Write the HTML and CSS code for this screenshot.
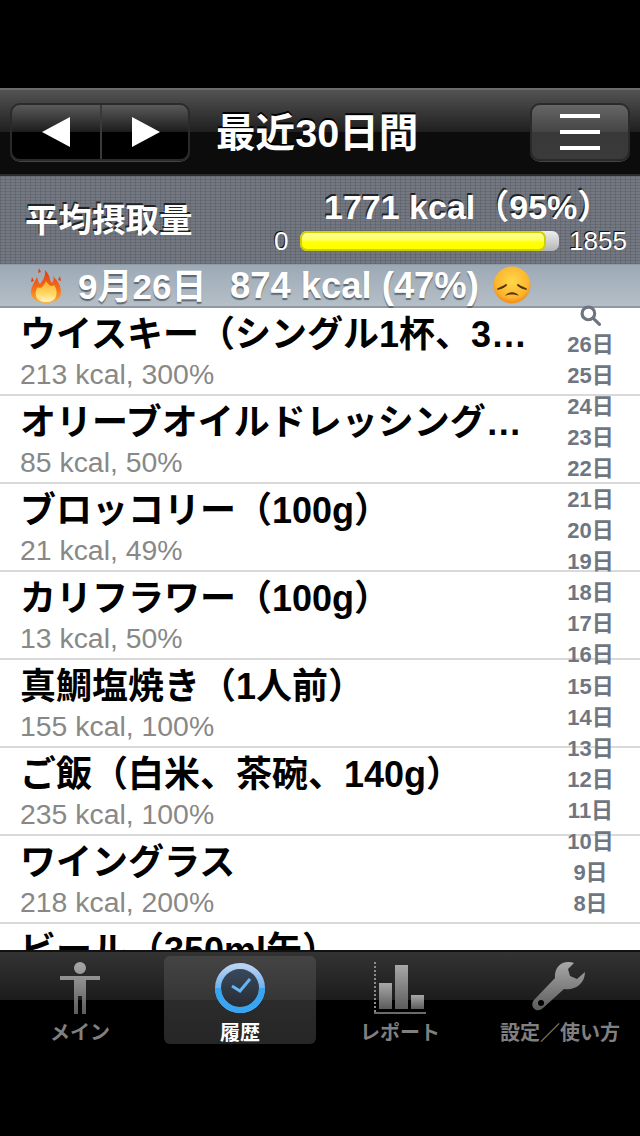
FILE: index.html
```html
<!DOCTYPE html>
<html lang="ja">
<head>
    <meta charset="UTF-8">
    <meta name="viewport" content="width=device-width, initial-scale=1.0">
    <title>最近30日間</title>
    <link rel="stylesheet" href="styles.css">
</head>
<body>
    <div class="app">
        <header class="nav-bar">
            <div class="nav-button pager">
                <span class="pager-half">
                    <svg class="pager-arrow" viewBox="0 0 28 30"><polygon points="0,15 28,0 28,30"/></svg>
                </span>
                <span class="pager-half">
                    <svg class="pager-arrow" viewBox="0 0 28 30"><polygon points="28,15 0,0 0,30"/></svg>
                </span>
            </div>
            <h1 class="nav-title">最近30日間</h1>
            <div class="nav-button menu">
                <span class="menu-line"></span>
                <span class="menu-line"></span>
                <span class="menu-line"></span>
            </div>
        </header>

        <section class="summary">
            <div class="summary-label">平均摂取量</div>
            <div class="summary-data">
                <div class="summary-value">1771 kcal（95%）</div>
                <div class="gauge-row">
                    <span class="gauge-min">0</span>
                    <div class="gauge"><div class="gauge-fill" style="width: 95%"></div></div>
                    <span class="gauge-max">1855</span>
                </div>
            </div>
        </section>

        <div class="day-header">
            <svg class="flame" viewBox="0 0 32 36">
                <defs>
                    <linearGradient id="flameOuter" x1="0" y1="0" x2="0" y2="1">
                        <stop offset="0" stop-color="#e2380c"/>
                        <stop offset="0.6" stop-color="#f7731a"/>
                        <stop offset="1" stop-color="#fbb23c"/>
                    </linearGradient>
                    <linearGradient id="flameInner" x1="0" y1="0" x2="0" y2="1">
                        <stop offset="0" stop-color="#fba92a"/>
                        <stop offset="0.6" stop-color="#ffd964"/>
                        <stop offset="1" stop-color="#fff2c4"/>
                    </linearGradient>
                </defs>
                <path fill="url(#flameOuter)" d="M15 2 C21 8 19 12 22 15 C24 13 24 10 23 8 C28 13 31 18 31 24 C31 31 25 35 16 35 C7 35 1 31 1 24 C1 19 4 15 7 9 C8 12 8 14 10 16 C13 12 16 8 15 2Z"/>
                <path fill="url(#flameInner)" d="M16 13 C19 18 22 19 24 17 C27 21 27 26 26 28 C25 32 21 34 16 34 C11 34 7 32 6 28 C5 25 6 21 8 19 C10 21 13 20 16 13Z"/>
                <path fill="#e2400e" d="M1 14 L2 9 L4 13Z M28 12 L30 8 L31 13Z M8 5 L9 0 L11 4Z"/>
            </svg>
            <span class="day-date">9月26日</span>
            <span class="day-total">874 kcal (47%)</span>
            <svg class="face" viewBox="0 0 38 38">
                <defs>
                    <radialGradient id="faceFill" cx="0.5" cy="0.4" r="0.6">
                        <stop offset="0" stop-color="#ffd84a"/>
                        <stop offset="0.75" stop-color="#fcb52c"/>
                        <stop offset="1" stop-color="#f08a18"/>
                    </radialGradient>
                </defs>
                <circle cx="19" cy="19" r="18.5" fill="url(#faceFill)"/>
                <path d="M5 23 C8 22 11 21 13 19 M33 23 C30 22 27 21 25 19" stroke="#5a3208" stroke-width="1.8" stroke-linecap="round" fill="none"/>
                <path d="M12 30 C15 25 23 25 26 30 C23 28 15 28 12 30Z" fill="#5a3208"/>
            </svg>
        </div>

        <main class="list-area">
            <ul class="meal-list">
                <li class="meal-row"><div class="meal-name">ウイスキー（シングル1杯、3…</div><div class="meal-info">213 kcal, 300%</div></li>
                <li class="meal-row"><div class="meal-name">オリーブオイルドレッシング…</div><div class="meal-info">85 kcal, 50%</div></li>
                <li class="meal-row"><div class="meal-name">ブロッコリー（100g）</div><div class="meal-info">21 kcal, 49%</div></li>
                <li class="meal-row"><div class="meal-name">カリフラワー（100g）</div><div class="meal-info">13 kcal, 50%</div></li>
                <li class="meal-row"><div class="meal-name">真鯛塩焼き（1人前）</div><div class="meal-info">155 kcal, 100%</div></li>
                <li class="meal-row"><div class="meal-name">ご飯（白米、茶碗、140g）</div><div class="meal-info">235 kcal, 100%</div></li>
                <li class="meal-row"><div class="meal-name">ワイングラス</div><div class="meal-info">218 kcal, 200%</div></li>
                <li class="meal-row"><div class="meal-name">ビール（350ml缶）</div></li>
            </ul>
            <div class="day-index">
                <svg class="index-search" viewBox="0 0 20 20">
                    <circle cx="8" cy="8" r="6" fill="none" stroke="#6d7580" stroke-width="3"/>
                    <path d="M12.5 12.5 L18.5 18.5" stroke="#6d7580" stroke-width="3" stroke-linecap="round"/>
                </svg>
                <span>26日</span><span>25日</span><span>24日</span><span>23日</span><span>22日</span>
                <span>21日</span><span>20日</span><span>19日</span><span>18日</span><span>17日</span>
                <span>16日</span><span>15日</span><span>14日</span><span>13日</span><span>12日</span>
                <span>11日</span><span>10日</span><span>9日</span><span>8日</span>
            </div>
        </main>

        <nav class="tab-bar">
            <div class="tab">
                <svg class="tab-icon" viewBox="0 0 60 60">
                    <defs>
                        <linearGradient id="tabGray" x1="0" y1="0" x2="0" y2="1">
                            <stop offset="0" stop-color="#a8a8a8"/>
                            <stop offset="1" stop-color="#5c5c5c"/>
                        </linearGradient>
                    </defs>
                    <path fill="url(#tabGray)" d="M30 2 A6 6 0 1 1 30 14 A6 6 0 1 1 30 2Z M10 16 H50 V20 H36 V54 H32 V36 H28 V54 H24 V20 H10Z"/>
                </svg>
                <span class="tab-label">メイン</span>
            </div>
            <div class="tab active">
                <svg class="tab-icon" viewBox="0 0 60 60">
                    <defs>
                        <linearGradient id="clockTop" x1="0" y1="0" x2="0" y2="1">
                            <stop offset="0" stop-color="#b9d4f2"/>
                            <stop offset="0.5" stop-color="#6fb0ee"/>
                        </linearGradient>
                        <linearGradient id="clockBody" x1="0" y1="0" x2="0" y2="1">
                            <stop offset="0" stop-color="#3a4c60"/>
                            <stop offset="1" stop-color="#26292e"/>
                        </linearGradient>
                    </defs>
                    <circle cx="30" cy="28" r="22" fill="url(#clockBody)" stroke="url(#clockTop)" stroke-width="6"/>
                    <path d="M52 28 A22 22 0 0 1 8 28" fill="none" stroke="#37a5f2" stroke-width="6"/>
                    <path d="M22 26 L30 31 L40 19" fill="none" stroke="#65b6f2" stroke-width="3"/>
                </svg>
                <span class="tab-label">履歴</span>
            </div>
            <div class="tab">
                <svg class="tab-icon" viewBox="0 0 60 60">
                    <path d="M5 2 V52" stroke="#8c8c8c" stroke-width="2" stroke-dasharray="2 2"/>
                    <rect x="4" y="52" width="52" height="2" fill="#6a6a6a"/>
                    <rect x="9" y="23" width="13" height="26" fill="url(#tabGray)"/>
                    <rect x="25" y="5" width="13" height="44" fill="url(#tabGray)"/>
                    <rect x="41" y="35" width="13" height="14" fill="url(#tabGray)"/>
                </svg>
                <span class="tab-label">レポート</span>
            </div>
            <div class="tab">
                <svg class="tab-icon" viewBox="0 0 60 60">
                    <path fill="url(#tabGray)" fill-rule="evenodd" d="M38 2 C30 2 24 9 25 18 L4 40 C-1 46 6 54 13 48 L34 29 C44 31 55 24 55 12 L47 19 L40 16 L38 9 L44 3 C42 2 40 2 38 2Z M11 40 A3 3 0 1 0 11 46 A3 3 0 1 0 11 40Z"/>
                </svg>
                <span class="tab-label">設定／使い方</span>
            </div>
        </nav>
    </div>
</body>
</html>
```

FILE: styles.css
```css
* {
    margin: 0;
    padding: 0;
    box-sizing: border-box;
}

body {
    background: #000000;
    font-family: "Liberation Sans", "Noto Sans CJK JP", sans-serif;
}

.app {
    width: 640px;
    height: 1136px;
    padding: 88px 0;
    display: flex;
    flex-direction: column;
    overflow: hidden;
}

/* nav bar */
.nav-bar {
    height: 88px;
    flex: none;
    display: flex;
    align-items: center;
    padding: 0 10px;
    border-top: 2px solid #6a6a6a;
    border-bottom: 2px solid #2b2b2b;
    background: linear-gradient(#535353 0%, #1f1f1f 50%, #0c0c0c 50%, #0c0c0c 100%);
}

.nav-button {
    height: 58px;
    border: 2px solid #2a2a2a;
    border-radius: 10px;
}

.pager {
    width: 180px;
    display: flex;
    background: linear-gradient(#5a5a5a 0%, #1c1c1c 50%, #000000 50%, #000000 100%);
    box-shadow: 0 1px 0 #444444;
}

.pager-half {
    flex: 1;
    display: flex;
    align-items: center;
    justify-content: center;
    padding-left: 2px;
}

.pager-half:first-child {
    flex: none;
    width: 90px;
    padding-left: 0;
    border-right: 2px solid #3a3a3a;
}

.pager-arrow {
    width: 28px;
    height: 30px;
    fill: #ffffff;
}

.nav-title {
    margin-left: 26px;
    margin-right: auto;
    margin-top: -6px;
    font-size: 39.6px;
    font-weight: 700;
    color: #ffffff;
    text-shadow: 0 -2px 0 #000000;
}

.menu {
    width: 100px;
    display: flex;
    flex-direction: column;
    align-items: center;
    justify-content: center;
    gap: 12px;
    background: linear-gradient(#666666 0%, #444444 50%, #383838 50%, #3a3a3a 100%);
    box-shadow: 0 1px 0 #444444;
}

.menu-line {
    width: 40px;
    height: 4px;
    background: #ffffff;
}

/* summary */
.summary {
    height: 88px;
    flex: none;
    display: flex;
    justify-content: space-between;
    padding: 0 13px 0 25px;
    background-color: #6a6f79;
    background-image:
        repeating-linear-gradient(0deg, rgba(0, 0, 0, 0.07) 0 1px, rgba(255, 255, 255, 0.03) 1px 3px),
        repeating-linear-gradient(90deg, rgba(0, 0, 0, 0.07) 0 1px, rgba(255, 255, 255, 0.03) 1px 5px);
}

.summary-label {
    margin-top: 23px;
    font-size: 33.5px;
    line-height: 44px;
    font-weight: 700;
    color: #ffffff;
    text-shadow: -1px -2px 0 #222222;
}

.summary-data {
    width: 353px;
    padding-top: 10px;
}

.summary-value {
    padding-left: 50px;
    font-size: 34px;
    line-height: 42px;
    font-weight: 700;
    white-space: nowrap;
    color: #ffffff;
    text-shadow: -1px -2px 0 #222222;
}

.gauge-row {
    display: flex;
    align-items: center;
    margin-top: 1px;
    font-size: 26px;
    line-height: 24px;
    color: #ffffff;
    text-shadow: -1px -1px 0 #111111;
}

.gauge-min {
    width: 27px;
}

.gauge {
    width: 259px;
    height: 20px;
    flex: none;
    border-radius: 7px;
    background: linear-gradient(#eeeeee, #b5b5b5);
}

.gauge-fill {
    height: 20px;
    border: 2px solid #d0d000;
    border-radius: 7px;
    background: linear-gradient(#ffff9a 0%, #ffff66 40%, #ffff00 60%, #ffff00 100%);
}

.gauge-max {
    margin-left: 10px;
}

/* day header */
.day-header {
    height: 44px;
    flex: none;
    display: flex;
    align-items: center;
    padding-left: 30px;
    border-top: 1px solid #8f9ca8;
    border-bottom: 2px solid #8f99a3;
    background: linear-gradient(#9ca9b5, #b6bfc8);
    font-weight: 700;
    color: #ffffff;
    text-shadow: 0 2px 1px #5f6871;
}

.flame {
    width: 32px;
    height: 36px;
    flex: none;
    margin-right: 16px;
}

.day-date {
    width: 152px;
    margin-top: -4px;
    font-size: 35px;
}

.day-total {
    font-size: 36.4px;
}

.face {
    width: 38px;
    height: 38px;
    flex: none;
    margin-left: 14px;
    margin-top: -2px;
}

/* list */
.list-area {
    flex: 1;
    min-height: 0;
    position: relative;
    background: #ffffff;
}

.meal-list {
    list-style: none;
    height: 100%;
    overflow: hidden;
}

.meal-row {
    height: 88px;
    padding: 3px 100px 0 20px;
    border-bottom: 2px solid #d9d9d9;
}

.meal-name {
    font-size: 36px;
    line-height: 47px;
    font-weight: 700;
    color: #000000;
    white-space: nowrap;
}

.meal-info {
    font-size: 28.4px;
    line-height: 32px;
    color: #888888;
}

.day-index {
    position: absolute;
    top: -3px;
    right: 0;
    width: 99px;
    display: flex;
    flex-direction: column;
    align-items: center;
    font-size: 22px;
    line-height: 31.05px;
    font-weight: 700;
    color: #6f7681;
}

.index-search {
    width: 21px;
    height: 21px;
    margin-bottom: 3px;
}

/* tab bar */
.tab-bar {
    height: 98px;
    flex: none;
    display: flex;
    padding-top: 4px;
    padding-bottom: 4px;
    border-top: 2px solid #111111;
    background: linear-gradient(#333333 0%, #1c1c1c 50%, #000000 50%, #000000 100%);
}

.tab {
    flex: 1;
    display: flex;
    flex-direction: column;
    align-items: center;
    margin: 0 4px;
    border-radius: 6px;
}

.tab.active {
    background: linear-gradient(#444444 0%, #363636 50%, #2b2b2b 50%, #262626 100%);
}

.tab-icon {
    width: 60px;
    height: 60px;
    margin-top: 4px;
    flex: none;
}

.tab-label {
    margin-top: 1px;
    font-size: 20px;
    line-height: 24px;
    font-weight: 700;
    color: #808080;
    white-space: nowrap;
}

.tab.active .tab-label {
    color: #ffffff;
}
```
